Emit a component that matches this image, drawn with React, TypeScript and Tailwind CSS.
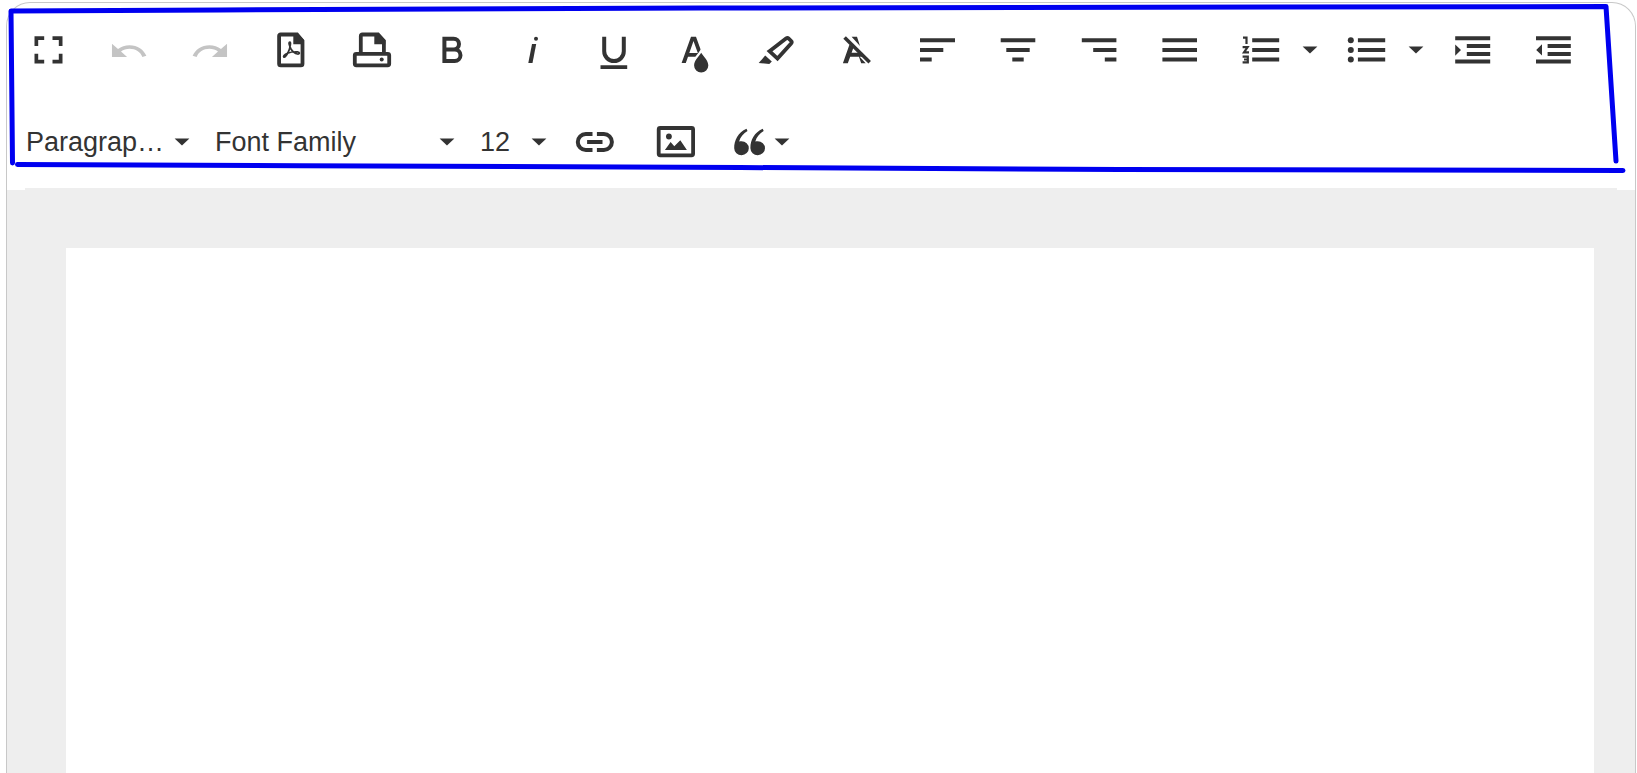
import React from 'react'
import clsx from 'clsx';


interface IconProps {
    children : React.ReactNode;
}

// every toolbar glyph is drawn on the same 48px canvas
const Icon = ({ children } : IconProps) => (
    <svg viewBox="0 0 48 48" className="size-12 shrink-0" fill="currentColor" aria-hidden="true">
        {children}
    </svg>
)

const Caret = () => (
    <svg viewBox="0 0 16 8" className="h-2 w-4 shrink-0" fill="currentColor" aria-hidden="true">
        <path d="M.6.4h14.800L8 7.600z"/>
    </svg>
)

const undoPath = "M12.500 8c-2.650 0-5.050.990-6.900 2.600L2 7v9h9l-3.620-3.620c1.390-1.160 3.160-1.880 5.120-1.880 3.540 0 6.550 2.310 7.600 5.500l2.370-.780C21.080 11.030 17.150 8 12.500 8z"

const icons = {
    fullscreen: <path d="M10.500 10.300h9.700v3.700H14.200v6h-3.700zM28.500 10.300h10V20h-3.700v-6h-6.300zM10.500 27.700h3.700v6h6v3.700h-9.700zM34.800 27.700h3.700v9.700h-10v-3.700h6.300z"/>,
    undo: <path transform="translate(3.600 7.300) scale(1.680 1.480)" d={undoPath}/>,
    redo: <path transform="translate(44.400 7.300) scale(-1.680 1.480)" d={undoPath}/>,
    pdf: (
        <>
            <path d="M13.700 8.500H30L35.500 15v22.700q0 1.600-1.600 1.600H13.700q-1.600 0-1.600-1.600V10.100q0-1.600 1.600-1.600z" fill="none" stroke="currentColor" strokeWidth="3.800"/>
            <path d="M26.300 8v10.300H37V14l-6-6z"/>
            <path d="M23 16c-2 0-.5 4 1 7 1.500 2.500 4 4.500 6.500 5 2.500.3 2.500-2 0-2.200-3-.2-7 .3-10 1.500-3 1.200-4.500 3-3.700 3.700 1 .8 3-2 4.500-5 1.500-3 3-10 1.700-10z" fill="none" stroke="currentColor" strokeWidth="1.700"/>
        </>
    ),
    print: (
        <>
            <path d="M12.800 27V10.100q0-1.600 1.600-1.600H30L35.900 15v12" fill="none" stroke="currentColor" strokeWidth="3.800"/>
            <path d="M26.300 8v10.300h11V14l-6-6z"/>
            <rect x="6.800" y="27.800" width="34.400" height="11.500" rx="1.500" fill="none" stroke="currentColor" strokeWidth="3.800"/>
            <circle cx="33.700" cy="33.500" r="2"/>
        </>
    ),
    bold: <path d="M15.400 12.700h9.200a5.400 5.400 0 0 1 0 10.800h-9.200M24.700 23.500h1a5.800 5.800 0 0 1 0 11.600H15.400V10.700" fill="none" stroke="currentColor" strokeWidth="4"/>,
    italic: (
        <>
            <circle cx="27" cy="12.700" r="2"/>
            <path d="M23 18h4.200l-3.700 19h-4.200z"/>
        </>
    ),
    underline: (
        <>
            <path d="M14.200 10.700v14.600a9.800 9.800 0 0 0 19.600 0V10.700" fill="none" stroke="currentColor" strokeWidth="4"/>
            <path d="M10.500 39.300h26.700V43H10.500z"/>
        </>
    ),
    fontColor: (
        <>
            <path fillRule="evenodd" d="M10.600 37l9.400-26.300h5l6.500 18-1.700 2H17L14.800 37zM18.300 27h8.500l-4.300-12z"/>
            <path d="M30.200 26.800c2.500 3.700 7.100 8 7.100 12.600a7.100 7.100 0 0 1-14.200 0c0-4.600 4.600-8.900 7.100-12.600z" stroke="white" strokeWidth="4.500" paintOrder="stroke"/>
        </>
    ),
    highlight: (
        <>
            <path d="M6.700 37l6.500-7.500 6.600 5.900-2.500 2.600z"/>
            <path d="M17.500 25.200L34.300 12.300q1.200-.9 2.200.1l2.700 2.600q1 1 .1 2.200L25.500 32.600z" fill="none" stroke="currentColor" strokeWidth="3.800"/>
        </>
    ),
    clearFormat: (
        <>
            <path d="M11.600 11.500L36.700 36.300" fill="none" stroke="currentColor" strokeWidth="3.600"/>
            <path d="M18.600 10.700h5.400l3 9.300zM9.900 37.300l6.600-18.800 4 3-1.900 5.200h7.200l4 4H17.200l-2.400 6.600zM25.500 29.500l7.200 7.800h-4.500z"/>
        </>
    ),
    alignLeft: <path d="M6 12.300h35v4H6zM6 22h23.300v4H6zM6 31.500h11.700v4H6z"/>,
    alignCenter: <path d="M6.700 12.300h34.600v4H6.700zM12.300 22h23.400v4H12.300zM18.300 31.500h11.400v4H18.300z"/>,
    alignRight: <path d="M6.800 12.300h34.600v4H6.800zM18.200 22h23.200v4H18.200zM29.800 31.500h11.600v4H29.800z"/>,
    alignJustify: <path d="M6.400 12.300H41v4H6.400zM6.400 22H41v4H6.400zM6.400 31.500H41v4H6.400z"/>,
    orderedList: (
        <>
            <path d="M15.200 12.300h27v4h-27zM15.200 22h27v4h-27zM15.200 31.500h27v4h-27z"/>
            <path d="M6 11.700h3.500V18M5.600 21.200h5l-3.600 5.200h5M5.600 30.700h5.200v5.700H5.600M7 33.500h4" fill="none" stroke="currentColor" strokeWidth="2.200"/>
        </>
    ),
    bulletList: (
        <>
            <path d="M14.900 12.300h27.300v4H14.900zM14.900 22h27.300v4H14.900zM14.900 31.500h27.300v4H14.900z"/>
            <circle cx="7.800" cy="14.300" r="3"/>
            <circle cx="7.800" cy="24" r="3"/>
            <circle cx="7.800" cy="33.500" r="3"/>
        </>
    ),
    indent: <path d="M6.200 10.300h35v4h-35zM17.800 18h23.400v4H17.800zM17.800 26h23.400v4H17.800zM6.200 33.600h35v3.900h-35zM6.200 18.500v11.300L12 24z"/>,
    outdent: <path d="M6 10.300h34.800v4H6zM17.600 18h23.200v4H17.600zM17.600 26h23.200v4H17.600zM6 33.600h34.800v3.900H6zM12 18.300v11.300L6.200 24z"/>,
    link: <path d="M20.500 16h-6.700a8 8 0 0 0 0 16h6.700M24.900 16h7a8 8 0 0 1 0 16h-7M15.100 24h15.400" fill="none" stroke="currentColor" strokeWidth="4"/>,
    image: (
        <>
            <rect x="5.700" y="10" width="34.400" height="27.300" rx="1.500" fill="none" stroke="currentColor" strokeWidth="3.800"/>
            <circle cx="15.900" cy="18.500" r="2.900"/>
            <path d="M11.900 32l5.700-8 3.700 4.200 6-6L33.900 32z"/>
        </>
    ),
    quote: (
        <>
            <path d="M21.500 10.800C13 14.500 9 22.500 9.200 30.300a7.300 7 0 1 0 7.300-7.100c-.9 0-1.700.2-2.400.4 1.200-4.500 4.400-8.300 8.400-10.600z"/>
            <path d="M37.700 10.800C29.200 14.500 25.200 22.500 25.400 30.300a7.300 7 0 1 0 7.300-7.100c-.9 0-1.700.2-2.400.4 1.200-4.500 4.400-8.300 8.400-10.600z"/>
        </>
    ),
}

type IconName = keyof typeof icons

interface ToolButtonProps {
    icon : IconName;
    label : string;
    disabled? : boolean;
    className? : string;
}

const ToolButton = ({ icon, label, disabled, className } : ToolButtonProps) => (
    <button
        type="button"
        aria-label={label}
        disabled={disabled}
        className={clsx("flex h-12 items-center justify-center disabled:text-[#c4c4c4]", className)}
    >
        <Icon>{icons[icon]}</Icon>
    </button>
)

const SplitButton = ({ icon, label } : ToolButtonProps) => (
    <div className="flex w-[106px] shrink-0 items-center">
        <ToolButton icon={icon} label={label} className="w-[81px]"/>
        <button type="button" aria-label={`${label} styles`} className="flex h-12 w-[18px] items-center justify-center">
            <Caret/>
        </button>
    </div>
)

interface ToolSelectProps {
    label : string;
    options : string[];
    className : string;
}

const ToolSelect = ({ label, options, className } : ToolSelectProps) => (
    <div className={clsx("relative flex shrink-0 items-center", className)}>
        <select aria-label={label} className="h-12 w-full appearance-none bg-transparent pl-[2px] text-[27px] outline-none">
            {options.map((option) => (
                <option key={option}>{option}</option>
            ))}
        </select>
        <span className="pointer-events-none absolute right-0">
            <Caret/>
        </span>
    </div>
)

const mainTools : ToolButtonProps[] = [
    { icon: "fullscreen", label: "Fullscreen" },
    { icon: "undo", label: "Undo", disabled: true },
    { icon: "redo", label: "Redo", disabled: true },
    { icon: "pdf", label: "Export PDF" },
    { icon: "print", label: "Print" },
    { icon: "bold", label: "Bold" },
    { icon: "italic", label: "Italic" },
    { icon: "underline", label: "Underline" },
    { icon: "fontColor", label: "Text color" },
    { icon: "highlight", label: "Background color" },
    { icon: "clearFormat", label: "Clear formatting" },
    { icon: "alignLeft", label: "Align left" },
    { icon: "alignCenter", label: "Align center" },
    { icon: "alignRight", label: "Align right" },
    { icon: "alignJustify", label: "Justify" },
]

// hand drawn marker around the toolbar
const Marker = () => (
    <svg
        viewBox="0 0 1637 190"
        preserveAspectRatio="none"
        className="pointer-events-none absolute left-0 top-0 h-[190px] w-full"
        fill="none"
        stroke="#0000f0"
        strokeWidth="5"
        strokeLinecap="round"
        strokeLinejoin="round"
        aria-hidden="true"
    >
        <path d="M12.500 163L11 11L220 10L700 8L1606 6.500L1616 161"/>
        <path d="M17.500 164.500L300 165.700L740 167.500L1120 169.500L1623 170.500"/>
    </svg>
)


const App = () => {
    return (
        <div className="relative flex min-h-screen flex-col bg-white pl-[6px] pr-px pt-[2px] font-['Liberation_Sans',Arial,sans-serif] text-[#333333]">
            <div className="flex flex-1 flex-col overflow-hidden rounded-t-3xl border border-b-0 border-[#c8c8c8]">
                <div role="toolbar" aria-label="Formatting" className="pl-px pr-[41px] pt-px">
                    <div className="flex h-[92px] items-center">
                        {mainTools.map((tool) => (
                            <ToolButton key={tool.icon} {...tool} className="min-w-0 flex-1"/>
                        ))}
                        <SplitButton icon="orderedList" label="Ordered list"/>
                        <SplitButton icon="bulletList" label="Bullet list"/>
                        <ToolButton icon="indent" label="Indent" className="min-w-0 flex-1"/>
                        <ToolButton icon="outdent" label="Outdent" className="min-w-0 flex-1"/>
                    </div>
                    <div className="flex h-[92px] items-center gap-2 pl-4">
                        <div className="flex gap-[23px]">
                            <ToolSelect label="Paragraph format" options={["Paragrap…"]} className="w-[166px]"/>
                            <ToolSelect label="Font family" options={["Font Family"]} className="w-[242px]"/>
                            <ToolSelect label="Font size" options={["12"]} className="w-[69px]"/>
                        </div>
                        <div className="flex">
                            <ToolButton icon="link" label="Insert link" className="w-[81px]"/>
                            <ToolButton icon="image" label="Insert image" className="w-[81px]"/>
                            <button type="button" aria-label="Quote" className="flex items-center gap-px pl-2">
                                <Icon>{icons.quote}</Icon>
                                <Caret/>
                            </button>
                        </div>
                    </div>
                </div>
                <div className="mx-[18px] h-[2px] bg-[#eeeeee]"/>
                <div className="flex flex-1 flex-col bg-[#eeeeee] pl-[59px] pr-[41px] pt-[58px]">
                    <textarea aria-label="Document" className="block w-full flex-1 resize-none bg-white p-8 text-lg outline-none"/>
                </div>
            </div>
            <Marker/>
        </div>
    )
}

export default App
